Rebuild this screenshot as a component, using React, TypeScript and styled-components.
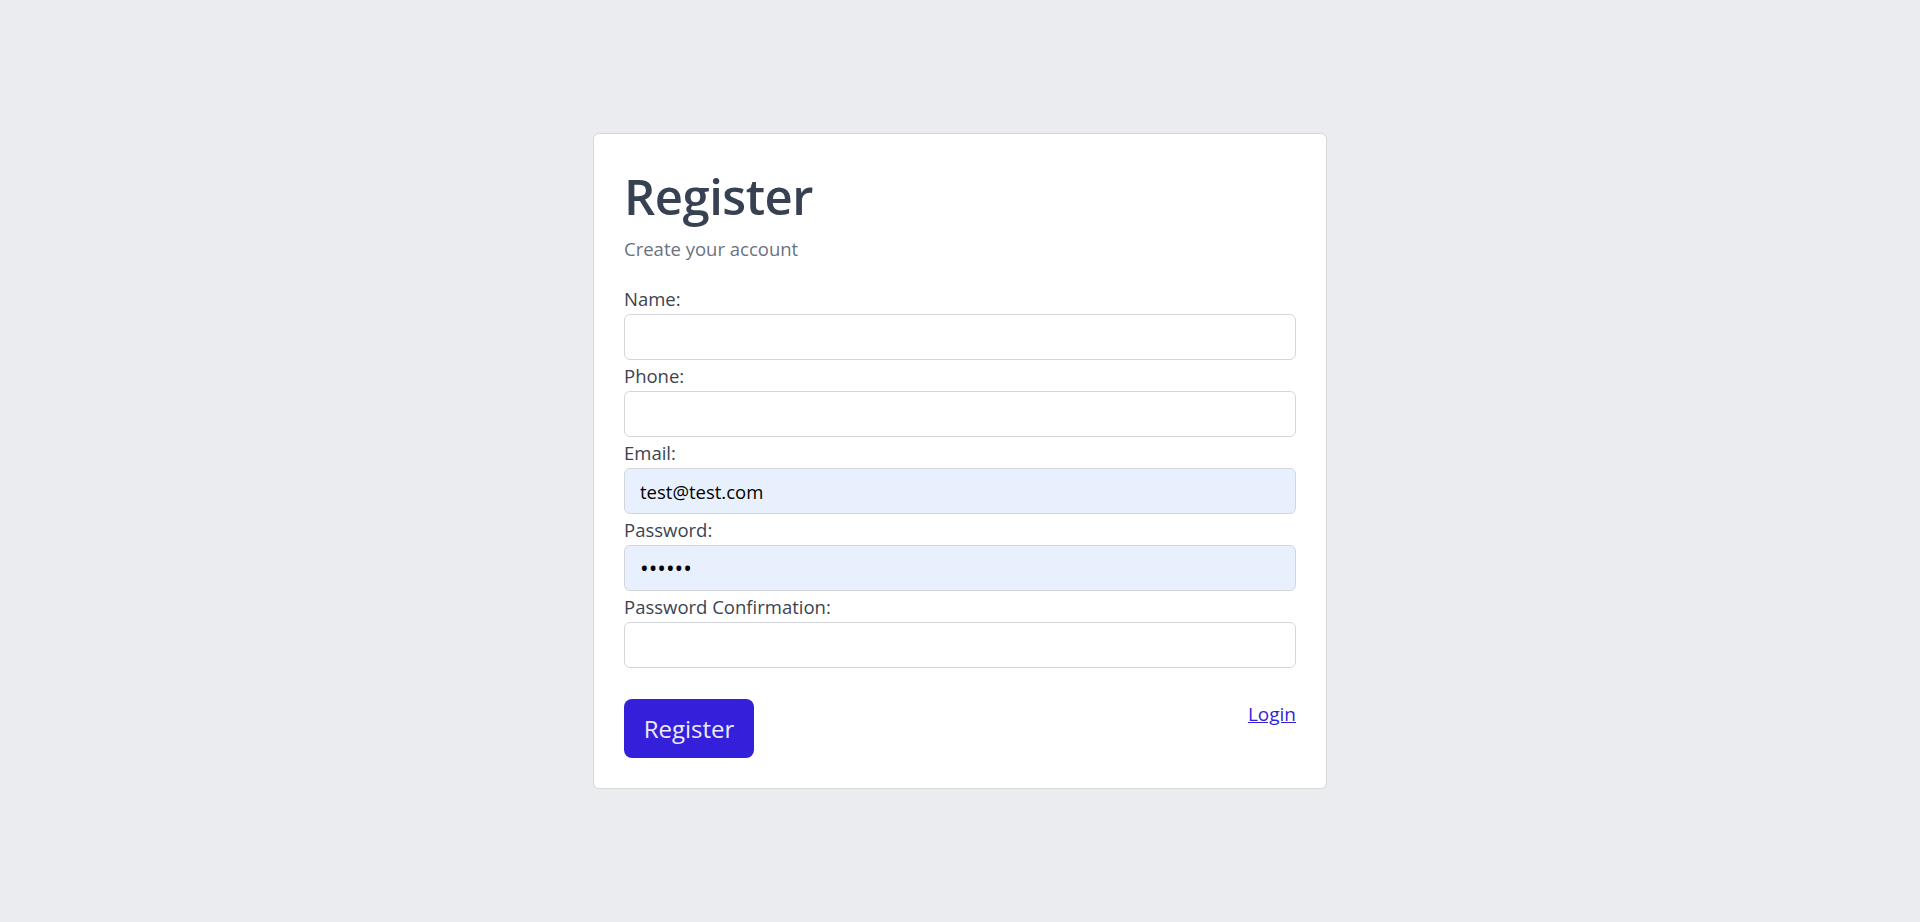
import styled, { createGlobalStyle } from "styled-components";

const GlobalStyle = createGlobalStyle`
  html, body {
    margin: 0;
    padding: 0;
    background: #ebecef;
    font-family: "Open Sans", "Noto Sans", Arial, sans-serif;
  }
  * {
    box-sizing: border-box;
  }
`;

const Page = styled.div`
  min-height: 922px;
  display: flex;
  justify-content: center;
  align-items: flex-start;
  padding-top: 133px;
`;

const Card = styled.form`
  width: 734px;
  background: #ffffff;
  border: 1px solid #d6d7db;
  border-radius: 6px;
  padding: 32px 30px 30px 30px;
  display: flex;
  flex-direction: column;
`;

const Title = styled.h1`
  margin: 0;
  font-size: 49px;
  line-height: 60px;
  font-weight: 600;
  color: #374151;
  letter-spacing: -0.5px;
`;

const Subtitle = styled.p`
  margin: 10px 0 21px 0;
  font-size: 18.5px;
  line-height: 26px;
  color: #6b7280;
`;

const Field = styled.div`
  display: flex;
  flex-direction: column;
`;

const Label = styled.label`
  font-size: 18.5px;
  line-height: 31px;
  color: #3b4350;
`;

const Input = styled.input<{ $filled?: boolean }>`
  height: 46px;
  width: 100%;
  border: 1px solid #d4d6dc;
  border-radius: 6px;
  padding: 0 15px;
  font-family: "Open Sans", "Noto Sans", Arial, sans-serif;
  font-size: 18.5px;
  color: #000000;
  background: ${(p) => (p.$filled ? "#e8f0fe" : "#ffffff")};
  outline: none;

  &[type="password"] {
    font-size: 23px;
  }
`;

const Actions = styled.div`
  display: flex;
  justify-content: space-between;
  align-items: flex-start;
  margin-top: 31px;
`;

const Button = styled.button`
  height: 59px;
  width: 130px;
  border: none;
  border-radius: 8px;
  background: #341fdb;
  color: #eceaff;
  font-family: "Open Sans", "Noto Sans", Arial, sans-serif;
  font-size: 24px;
  cursor: pointer;
`;

const LoginLink = styled.a`
  margin-top: 2px;
  font-size: 19px;
  line-height: 26px;
  color: #341fdb;
  text-decoration: underline;
  cursor: pointer;
`;

const fields = [
  { label: "Name:", type: "text", value: "" },
  { label: "Phone:", type: "text", value: "" },
  { label: "Email:", type: "email", value: "test@test.com" },
  { label: "Password:", type: "password", value: "testte" },
  { label: "Password Confirmation:", type: "password", value: "" },
];

function App() {
  return (
    <>
      <GlobalStyle />
      <Page>
        <Card onSubmit={(e) => e.preventDefault()}>
          <Title>Register</Title>
          <Subtitle>Create your account</Subtitle>
          {fields.map((f) => (
            <Field key={f.label}>
              <Label>{f.label}</Label>
              <Input
                type={f.type}
                defaultValue={f.value}
                $filled={f.value !== ""}
              />
            </Field>
          ))}
          <Actions>
            <Button type="submit">Register</Button>
            <LoginLink href="#">Login</LoginLink>
          </Actions>
        </Card>
      </Page>
    </>
  );
}

export default App;
